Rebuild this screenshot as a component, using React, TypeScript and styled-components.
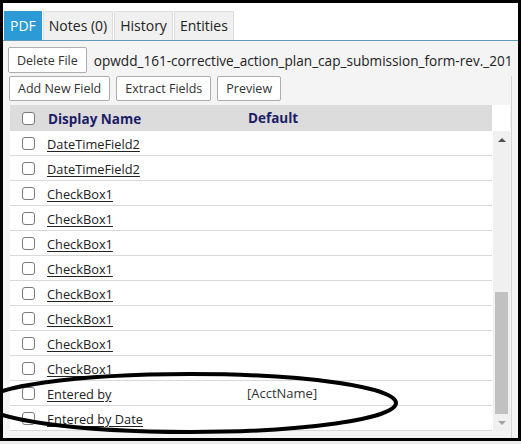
import React from "react";
import styled, { createGlobalStyle } from "styled-components";

const GlobalStyle = createGlobalStyle`
  html, body {
    margin: 0;
    padding: 0;
    background: #ececec;
  }
  body {
    font-family: "Open Sans", "Noto Sans", "DejaVu Sans", sans-serif;
  }
  * { box-sizing: border-box; }
`;

const Frame = styled.div`
  position: relative;
  width: 521px;
  height: 441px;
  border: 3px solid #000;
  background: #f4f4f4;
  overflow: hidden;
  display: flex;
  flex-direction: column;
`;

const TabBar = styled.div`
  height: 38px;
  flex: none;
  display: flex;
  align-items: flex-end;
  gap: 1px;
  padding-left: 1px;
  background: #fff;
  border-bottom: 1px solid #5f9db6;
`;

const Tab = styled.div<{ $active?: boolean }>`
  height: 29px;
  line-height: 28px;
  padding: 0 5px;
  font-size: 14px;
  color: ${(p) => (p.$active ? "#fff" : "#222")};
  background: ${(p) => (p.$active ? "#2c9ad5" : "#f0f0f0")};
  border: 1px solid ${(p) => (p.$active ? "#2c9ad5" : "#dedede")};
  border-bottom: none;
  white-space: nowrap;
`;

const FileBar = styled.div`
  flex: none;
  display: flex;
  align-items: center;
  gap: 7px;
  margin-top: 6px;
  padding-left: 5px;
  white-space: nowrap;
`;

const FileName = styled.span`
  font-size: 13.6px;
  color: #222;
  white-space: nowrap;
`;

const Workspace = styled.div`
  flex: 1;
  width: 509px;
  margin-top: 3px;
  border-right: 1px solid #d4d4d4;
  display: flex;
  flex-direction: column;
`;

const Toolbar = styled.div`
  display: flex;
  gap: 6px;
  padding-left: 6px;
`;

const Button = styled.button<{ $h?: number }>`
  height: ${(p) => p.$h ?? 25}px;
  padding: 0 8px;
  font-family: inherit;
  font-size: 12.5px;
  color: #333;
  background: #fff;
  border: 1px solid #adadad;
  border-radius: 2px;
  white-space: nowrap;
  flex: none;
`;

const Grid = styled.div`
  margin: 4px 0 0 7px;
  width: 500px;
  display: flex;
  flex-direction: column;
`;

const HeaderRow = styled.div`
  height: 26px;
  display: flex;
  align-items: center;
  background: linear-gradient(to right, #dcdcdc 482px, #fff 482px);
`;

const Body = styled.div`
  display: flex;
  height: 300px;
`;

const Rows = styled.div`
  width: 482px;
  display: flex;
  flex-direction: column;
  background: #fff;
`;

const Row = styled.div`
  height: 25px;
  flex: none;
  display: flex;
  align-items: center;
  border-bottom: 1px solid #d9d9d9;
`;

const CheckCell = styled.div`
  width: 34px;
  padding-left: 12px;
  display: flex;
  align-items: center;
`;

const Check = styled.span`
  width: 13px;
  height: 13px;
  border: 1px solid #7a7a7a;
  border-radius: 3px;
  background: #fff;
`;

const NameCell = styled.div`
  width: 200px;
  padding-left: 3px;
`;

const DefaultCell = styled.div`
  flex: 1;
  padding-left: 3px;
  font-size: 13px;
  color: #333;
`;

const HeadText = styled.span<{ $pad?: number }>`
  font-size: 13.5px;
  font-weight: 700;
  color: #1c1c66;
  padding-left: ${(p) => p.$pad ?? 0}px;
`;

const FieldLink = styled.a`
  font-size: 12.8px;
  color: #222;
  text-decoration: underline;
  text-underline-offset: 2px;
`;

const ScrollTrack = styled.div`
  width: 18px;
  border-left: 1px solid #fff;
  background: #f0f0f0;
  display: flex;
  flex-direction: column;
`;

const ScrollArrow = styled.div<{ $dir: "up" | "down"; $dim?: boolean }>`
  height: 17px;
  flex: none;
  display: flex;
  align-items: center;
  justify-content: center;
  &::after {
    content: "";
    width: 0;
    height: 0;
    border-left: 4px solid transparent;
    border-right: 4px solid transparent;
    ${(p) =>
      p.$dir === "up"
        ? `border-bottom: 4px solid ${p.$dim ? "#a3a3a3" : "#505050"};`
        : `border-top: 4px solid ${p.$dim ? "#a3a3a3" : "#505050"};`}
  }
`;

const ScrollGap = styled.div`
  flex: none;
`;

const ScrollThumb = styled.div`
  flex: none;
  margin: 0 2px 0 2px;
  background: #c1c1c1;
`;

const Loop = styled.svg`
  position: absolute;
  left: -3px;
  top: -3px;
  pointer-events: none;
`;

type Field = { name: string; def?: string };

const fields: Field[] = [
  { name: "DateTimeField2" },
  { name: "DateTimeField2" },
  ...Array.from({ length: 8 }, () => ({ name: "CheckBox1" })),
  { name: "Entered by", def: "[AcctName]" },
  { name: "Entered by Date" },
];

export default function App() {
  const trackInner = 300 - 34;
  const thumbHeight = 122;
  const thumbTop = trackInner - thumbHeight;
  return (
    <>
      <GlobalStyle />
      <Frame>
        <TabBar>
          <Tab $active>PDF</Tab>
          <Tab>Notes (0)</Tab>
          <Tab>History</Tab>
          <Tab>Entities</Tab>
        </TabBar>
        <FileBar>
          <Button $h={26}>Delete File</Button>
          <FileName>opwdd_161-corrective_action_plan_cap_submission_form-rev._201</FileName>
        </FileBar>
        <Workspace>
          <Toolbar>
            <Button>Add New Field</Button>
            <Button>Extract Fields</Button>
            <Button>Preview</Button>
          </Toolbar>
          <Grid>
            <HeaderRow>
              <CheckCell>
                <Check />
              </CheckCell>
              <NameCell>
                <HeadText $pad={1}>Display Name</HeadText>
              </NameCell>
              <DefaultCell>
                <HeadText $pad={1}>Default</HeadText>
              </DefaultCell>
            </HeaderRow>
            <Body>
              <Rows>
                {fields.map((f, i) => (
                  <Row key={i}>
                    <CheckCell>
                      <Check />
                    </CheckCell>
                    <NameCell>
                      <FieldLink href="#">{f.name}</FieldLink>
                    </NameCell>
                    <DefaultCell>{f.def ?? ""}</DefaultCell>
                  </Row>
                ))}
              </Rows>
              <ScrollTrack>
                <ScrollArrow $dir="up" />
                <ScrollGap style={{ height: thumbTop }} />
                <ScrollThumb style={{ height: thumbHeight }} />
                <ScrollArrow $dir="down" $dim />
              </ScrollTrack>
            </Body>
          </Grid>
        </Workspace>
        <Loop width="521" height="444" viewBox="0 0 521 444">
          <ellipse
            cx="190"
            cy="403"
            rx="206"
            ry="29"
            fill="none"
            stroke="#000"
            strokeWidth="4"
          />
        </Loop>
      </Frame>
    </>
  );
}
